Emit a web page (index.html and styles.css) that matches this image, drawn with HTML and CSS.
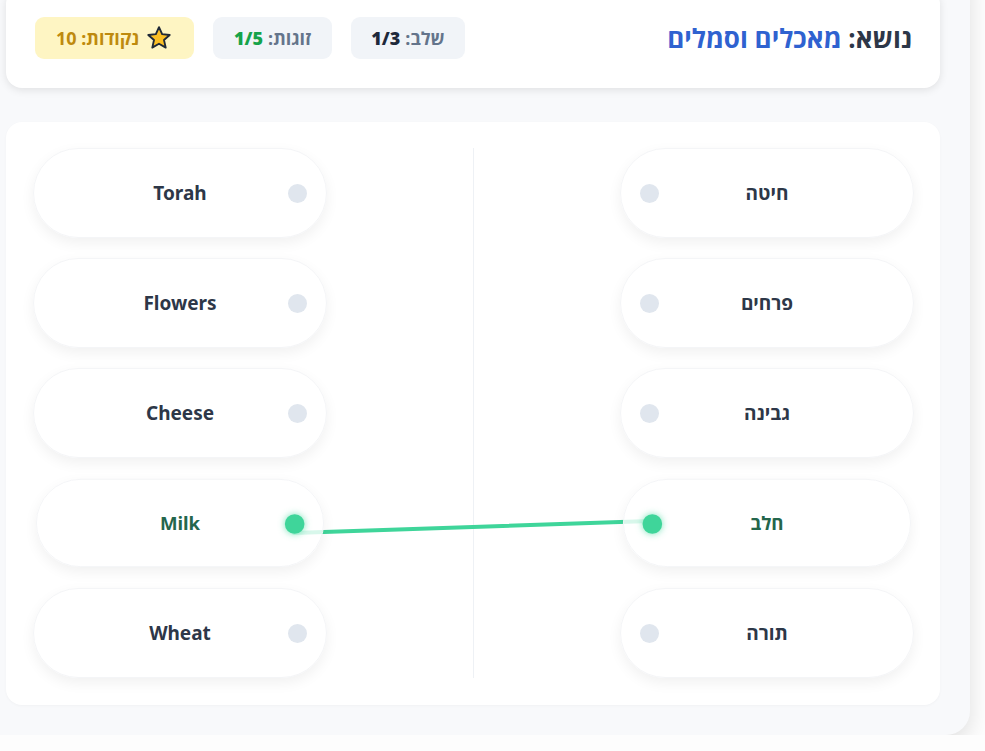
FILE: index.html
```
<!DOCTYPE html>
<html lang="he" dir="rtl">
<head>
  <meta charset="UTF-8" />
  <meta name="viewport" content="width=device-width, initial-scale=1.0"/>
  <title>התאמת זוגות</title>
  <link rel="stylesheet" href="styles.css">
</head>
<body>

  <div class="app">
    <!-- Top bar: topic + stats -->
    <header class="top-bar">
      <h1 class="topic">נושא: <span>מאכלים וסמלים</span></h1>
      <div class="stats">
        <span class="stat">שלב: <b>1/3</b></span>
        <span class="stat pairs">זוגות: <b class="ok">1/5</b></span>
        <span class="stat points">
          <svg class="star" viewBox="0 0 24 24" width="26" height="26">
            <polygon points="12,2 14.9,8.5 21.9,9.2 16.6,13.9 18.2,20.9 12,17.3 5.8,20.9 7.4,13.9 2.1,9.2 9.1,8.5" fill="#fbbf24" stroke="#1f2937" stroke-width="1.7" stroke-linejoin="round"/>
          </svg>
          נקודות: 10
        </span>
      </div>
    </header>

    <!-- Matching board -->
    <section class="board">
      <svg class="links" width="933" height="585">
        <line x1="288" y1="411" x2="644" y2="399" stroke="#3fd59a" stroke-width="4" stroke-linecap="round"/>
      </svg>

      <div class="col col-he">
        <div class="card"><span class="dot"></span>חיטה</div>
        <div class="card"><span class="dot"></span>פרחים</div>
        <div class="card"><span class="dot"></span>גבינה</div>
        <div class="card matched"><span class="dot"></span>חלב</div>
        <div class="card"><span class="dot"></span>תורה</div>
      </div>

      <div class="divider"></div>

      <div class="col col-en" dir="ltr">
        <div class="card"><span class="dot"></span>Torah</div>
        <div class="card"><span class="dot"></span>Flowers</div>
        <div class="card"><span class="dot"></span>Cheese</div>
        <div class="card matched"><span class="dot"></span>Milk</div>
        <div class="card"><span class="dot"></span>Wheat</div>
      </div>
    </section>
  </div>

</body>
</html>
```

FILE: styles.css
```
/* General */
body {
  margin: 0;
  font-family: "Noto Sans", "Open Sans", "Liberation Sans", sans-serif;
  background-color: #fdfdfd;
  color: #2d3748;
  overflow: hidden;
}

.app {
  margin: -42px 15px 0 -24px;
  padding: 30px;
  background-color: #f8f9fb;
  border-radius: 24px;
  box-shadow: 0 8px 22px rgba(0,0,0,0.12);
}

/* Top bar */
.top-bar {
  display: flex;
  justify-content: space-between;
  align-items: center;
  height: 100px;
  padding: 0 28px 0 29px;
  background: white;
  border-radius: 16px;
  box-shadow: 0 2px 8px rgba(0,0,0,0.1);
}

.topic {
  margin: 0;
  font-size: 26px;
  font-weight: 700;
  color: #2d3748;
}

.topic span {
  color: #2f62d0;
}

.stats {
  display: flex;
  gap: 19px;
}

.stat {
  display: flex;
  align-items: center;
  gap: 5px;
  height: 42px;
  padding: 0 20px;
  border-radius: 9px;
  background-color: #f1f4f8;
  color: #64748b;
  font-size: 18px;
  font-weight: 700;
}

.stat b {
  color: #1e293b;
}

.stat b.ok {
  color: #16a34a;
}

.stat.pairs {
  padding: 0 21px;
}

.stat.points {
  background-color: #fef5c3;
  color: #be8a0e;
  gap: 7px;
  padding: 0 22px 0 21px;
}

.star {
  flex: none;
}

/* Board */
.board {
  position: relative;
  display: grid;
  grid-template-columns: 294px 1fr 294px;
  margin-top: 34px;
  padding: 26px 26px 27px 27px;
  background: white;
  border-radius: 16px;
  box-shadow: 0 1px 3px rgba(0,0,0,0.03);
}

.links {
  position: absolute;
  top: 0;
  left: 0;
}

.col {
  display: flex;
  flex-direction: column;
  gap: 20px;
  position: relative;
}

.divider {
  justify-self: center;
  width: 1px;
  background-color: #eef1f5;
}

.card {
  position: relative;
  display: flex;
  align-items: center;
  justify-content: center;
  height: 90px;
  border-radius: 45px;
  background: rgba(255,255,255,0.92);
  border: 1px solid #f4f5f7;
  box-sizing: border-box;
  box-shadow: 0 5px 14px rgba(0,0,0,0.06);
  font-size: 19px;
  font-weight: 700;
  color: #2d3748;
}

.dot {
  position: absolute;
  top: 35px;
  width: 19px;
  height: 19px;
  border-radius: 50%;
  background-color: #e0e6ee;
}

.col-he .dot {
  left: 19px;
}

.col-en .dot {
  right: 19px;
}

/* Matched pair */
.card.matched {
  transform: scale(0.98);
  color: #24664c;
  background: rgba(255,255,255,0.8);
}

.card.matched .dot {
  width: 20px;
  height: 20px;
  background-color: #3fd59a;
  box-shadow: 0 0 8px rgba(63,213,154,0.7);
}
```
